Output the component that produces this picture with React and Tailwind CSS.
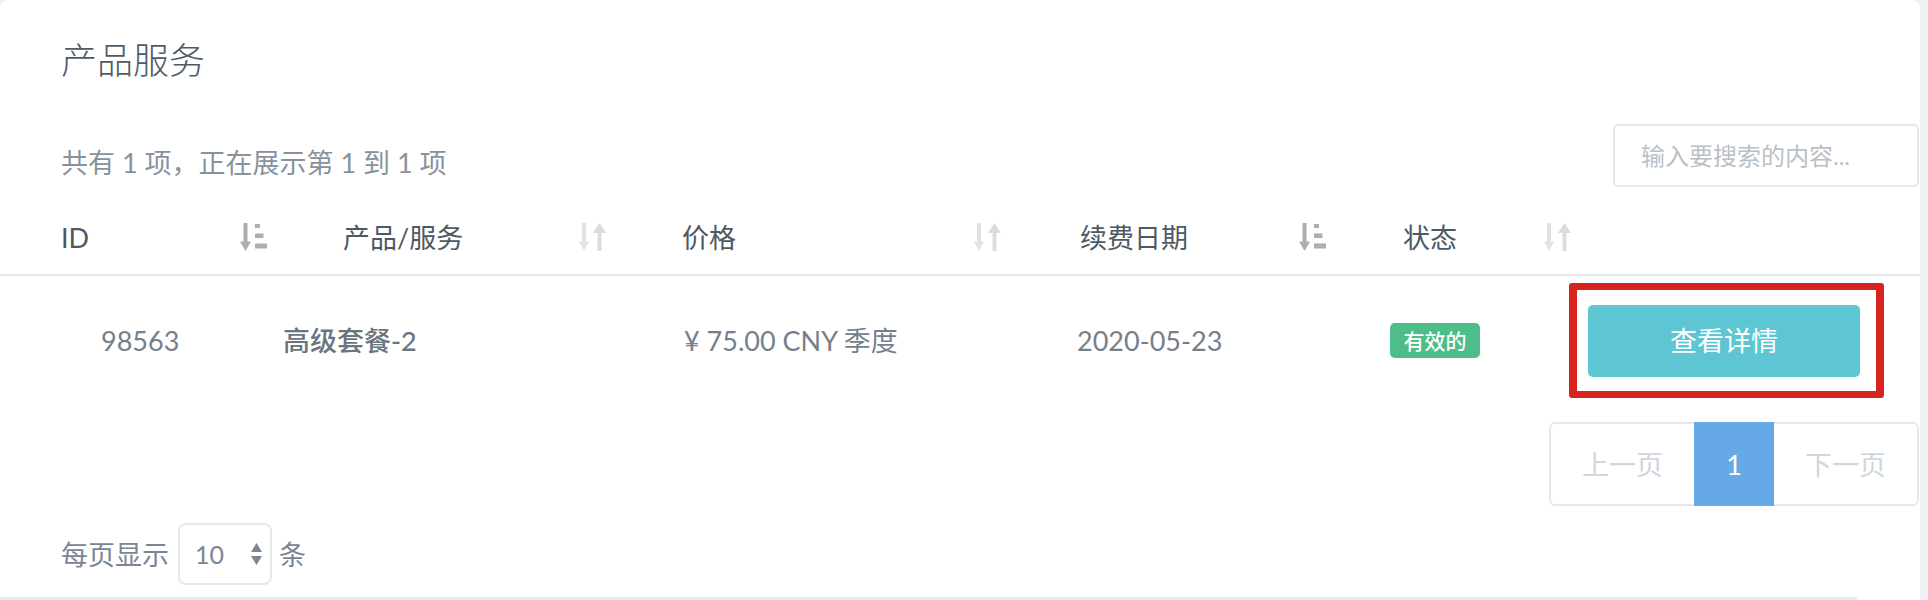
import React from "react";

const FONT = { fontFamily: "Lato, 'Noto Sans CJK SC', sans-serif" };

const SortActive = () => (
  <svg width="27" height="28" viewBox="0 0 27 28" className="shrink-0">
    <g fill="#a9afb5">
      <rect x="3.5" y="0" width="4" height="20" />
      <polygon points="0,18.5 11,18.5 5.5,28" />
      <rect x="15" y="1" width="5" height="4" />
      <rect x="15" y="10.5" width="8.5" height="4.5" />
      <rect x="15" y="20.5" width="12" height="5" />
    </g>
  </svg>
);

const SortBoth = () => (
  <svg width="27" height="28" viewBox="0 0 27 28" className="shrink-0">
    <g fill="#e0e3e6">
      <rect x="3" y="0" width="4" height="20" />
      <polygon points="0,18.5 10,18.5 5,28" />
    </g>
    <g fill="#d9dde1">
      <polygon points="14,10 27,10 20.5,0" />
      <rect x="18.5" y="9" width="4" height="19" />
    </g>
  </svg>
);

const HeadCell = ({ w, pl, label, active }) => (
  <div
    className={`${w} ${pl} pr-[16px] flex items-center justify-between`}
  >
    <span className="leading-none">{label}</span>
    {active ? <SortActive /> : <SortBoth />}
  </div>
);

export default function App() {
  return (
    <div
      className="w-[1928px] h-[600px] bg-[#eef1f4] flex overflow-hidden"
      style={FONT}
    >
      <div className="w-[1920px] h-[600px] bg-white rounded-t-[8px] flex flex-col">
        {/* Title */}
        <div className="h-[120px] flex items-center pl-[61px] text-[36px] font-light text-[#4f5a65] leading-none">
          产品服务
        </div>

        {/* Info + search */}
        <div className="h-[80px] flex justify-between items-start">
          <div className="pl-[61px] mt-[26px] leading-[34px] text-[27px] text-[#88929c]">
            共有 1 项，正在展示第 1 到 1 项
          </div>
          <input
            type="text"
            placeholder="输入要搜索的内容..."
            className="mt-[4px] mr-[1px] w-[306px] h-[63px] border-2 border-[#e4e9ee] rounded-[5px] pl-[26px] text-[24px] text-[#75808b] placeholder:text-[#b9c0c7] outline-none"
            style={FONT}
          />
        </div>

        {/* Table header */}
        <div className="h-[76px] flex border-b-2 border-[#e4e9ee] text-[27px] text-[#4e5964]">
          <HeadCell w="w-[283px]" pl="pl-[61px]" label="ID" active />
          <HeadCell w="w-[339px]" pl="pl-[60px]" label="产品/服务" />
          <HeadCell w="w-[395px]" pl="pl-[60px]" label="价格" />
          <HeadCell w="w-[325px]" pl="pl-[63px]" label="续费日期" active />
          <HeadCell w="w-[245px]" pl="pl-[61px]" label="状态" />
        </div>

        {/* Table row */}
        <div className="h-[128px] flex items-center text-[27px] text-[#75808b] leading-none">
          <div className="w-[283px] pl-[101px]">98563</div>
          <div className="w-[401px] font-medium text-[#6a7580]">高级套餐-2</div>
          <div className="w-[393px]">¥ 75.00 CNY 季度</div>
          <div className="w-[313px]">2020-05-23</div>
          <div className="w-[179px]">
            <span className="inline-flex items-center justify-center w-[90px] h-[35px] rounded-[5px] bg-[#4dbd89] text-white text-[21px] font-medium">
              有效的
            </span>
          </div>
          <div className="w-[315px] h-[115px] border-x-[8px] border-y-[7px] border-[#d8231f] rounded-[3px] pl-[11px] pt-[15px]">
            <button className="w-[272px] h-[72px] rounded-[5px] bg-[#5dc6d2] text-white text-[27px] leading-none">
              查看详情
            </button>
          </div>
        </div>

        {/* Pagination */}
        <div className="mt-[18px] flex justify-end pr-[1px]">
          <div className="flex h-[84px] text-[27px] leading-none">
            <div className="w-[145px] flex items-center justify-center border-y-2 border-l-2 border-[#e4e9ee] rounded-l-[6px] text-[#cfd6dd]">
              上一页
            </div>
            <div className="w-[80px] flex items-center justify-center bg-[#65a9e6] text-white">
              1
            </div>
            <div className="w-[145px] flex items-center justify-center border-y-2 border-r-2 border-[#e4e9ee] rounded-r-[6px] text-[#cfd6dd]">
              下一页
            </div>
          </div>
        </div>

        {/* Length menu */}
        <div className="mt-[17px] pl-[61px] flex items-center text-[27px] text-[#7a8591] leading-none">
          <span>每页显示</span>
          <div className="ml-[9px] w-[94px] h-[62px] border-2 border-[#e4e9ee] rounded-[8px] flex items-center pl-[15px] pr-[8px] justify-between">
            <span className="text-[25px]">10</span>
            <svg width="11" height="22" viewBox="0 0 11 22">
              <polygon points="5.5,0 11,9 0,9" fill="#7d8793" />
              <polygon points="0,13 11,13 5.5,22" fill="#7d8793" />
            </svg>
          </div>
          <span className="ml-[7px]">条</span>
        </div>

        <div className="mt-auto w-[1858px] h-[3px] bg-[#e9edf0] rounded-r-full" />
      </div>
    </div>
  );
}
